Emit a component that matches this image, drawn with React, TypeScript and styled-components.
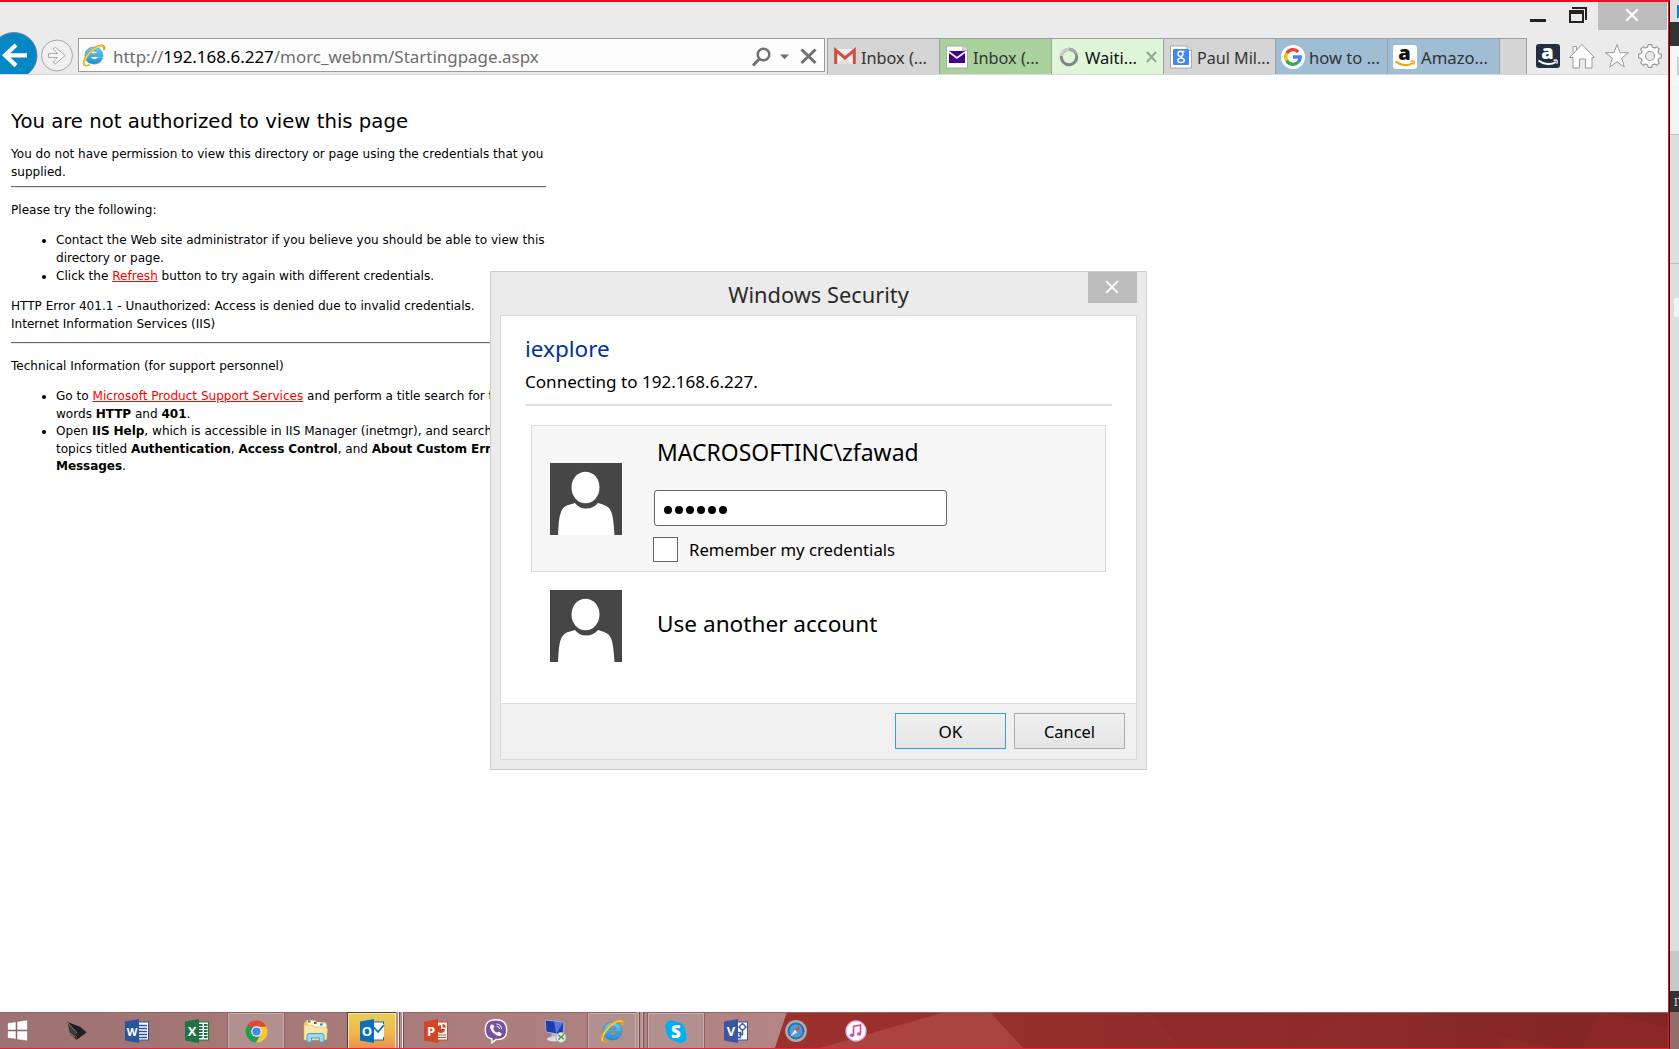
import React from 'react';
import styled, { createGlobalStyle } from 'styled-components';

const UI = '"Noto Sans", "Open Sans", sans-serif';
const PAGE = '"DejaVu Sans", sans-serif';

const Global = createGlobalStyle`
  * { box-sizing: border-box; }
  body { margin: 0; background: #fff; overflow: hidden; font-family: ${UI}; }
  svg { display: block; flex: none; overflow: visible; }
`;

const Screen = styled.div`
  display: flex;
  width: 1679px;
  height: 1049px;
  overflow: hidden;
`;
const Frame = styled.div`
  position: relative;
  display: flex;
  flex-direction: column;
  width: 1670px;
  height: 1049px;
  border-top: 2px solid #e81123;
  border-right: 1px solid #2b0508;
  border-bottom: 1px solid #ee2233;
  background: #fff;
  box-shadow: inset -1px 0 0 #e81123;
`;

/* caption */
const Caption = styled.header`
  display: flex;
  justify-content: flex-end;
  width: 1667px;
  height: 28px;
  background: #ebebeb;
`;
const CaptionButton = styled.button<{ $w: number; $close?: boolean }>`
  display: flex;
  align-items: center;
  justify-content: center;
  width: ${p => p.$w}px;
  height: 28px;
  padding: ${p => (p.$close ? '0 2px 2px 0' : '0 0 0 4px')};
  border: 0;
  background: ${p => (p.$close ? '#bcbcbc' : 'transparent')};
`;

/* toolbar */
const Toolbar = styled.div`
  display: flex;
  align-items: flex-start;
  width: 1668px;
  height: 45px;
  background: #ebebeb;
  border-bottom: 1px solid #d9d9d9;
`;
const NavButtons = styled.div`
  display: flex;
  width: 78px;
  height: 44px;
  overflow: hidden;
`;
const Address = styled.div`
  display: flex;
  align-items: center;
  width: 747px;
  height: 34px;
  margin-top: 8px;
  padding: 0 7px 0 3px;
  border: 1px solid #9a9c9b;
  background: #fdfdfd;
`;
const Url = styled.div`
  flex: 1;
  margin-left: 8px;
  padding-top: 3px;
  font-size: 16.95px;
  line-height: 31px;
  color: #6d6d6d;
  white-space: pre;
  b { font-weight: 400; color: #000; }
`;
const Tabs = styled.nav`
  display: flex;
  width: 700px;
  height: 36px;
  margin: 8px 0 0 2px;
  border-top: 1px solid #a0a0a0;
  border-right: 1px solid #a0a0a0;
  background: #d5d5d5;
`;
const Tab = styled.div<{ $bg: string; $active?: boolean }>`
  display: flex;
  align-items: center;
  width: 112px;
  height: 35px;
  padding-left: 5px;
  border-left: 1px solid #a0a0a0;
  background: ${p => p.$bg};
  color: ${p => (p.$active ? '#111' : '#333')};
`;
const TabIcon = styled.span`
  display: flex;
  justify-content: center;
  width: 24px;
  margin-right: 4px;
`;
const TabText = styled.span<{ $size: number }>`
  flex: 1;
  padding-top: 2px;
  font-size: ${p => p.$size}px;
  line-height: 32px;
  white-space: nowrap;
`;
const BlankTab = styled.div`
  width: 27px;
  border-left: 1px solid #a0a0a0;
`;
const Tools = styled.div`
  display: flex;
  align-items: center;
  gap: 8px;
  margin: 13px 0 0 9px;
`;

/* document */
const Doc = styled.main`
  display: flex;
  flex-direction: column;
  flex: 1;
  width: 536px;
  margin-left: 11px;
  padding-top: 34px;
  font-family: ${PAGE};
  font-size: 12.07px;
  line-height: 18px;
  color: #000;
  white-space: nowrap;
  b { letter-spacing: -0.08px; }
`;
const Heading = styled.h1`
  margin: 0 0 10px;
  font-size: 19.68px;
  line-height: 26px;
  font-weight: 400;
`;
const Para = styled.p<{ $mb: number }>`
  margin: 0 0 ${p => p.$mb}px;
`;
const Rule = styled.hr<{ $mb: number }>`
  width: 535px;
  height: 2px;
  margin: 0 0 ${p => p.$mb}px;
  border: 0;
  border-top: 1px solid #696969;
  border-bottom: 1px solid #e8e8e8;
`;
const List = styled.ul`
  margin: 0 0 12px;
  padding-left: 45px;
`;
const TightItem = styled.li`
  line-height: 17.7px;
`;
const Link = styled.a`
  color: #f00;
  text-decoration: underline;
`;

/* credential dialog */
const Dialog = styled.section`
  position: absolute;
  left: 490px;
  top: 269px;
  display: flex;
  flex-direction: column;
  width: 657px;
  height: 499px;
  padding: 0 9px 9px;
  border: 1px solid #cfcfcf;
  background: #ebebeb;
  color: #000;
`;
const DialogBar = styled.div`
  display: grid;
  grid-template-columns: 49px 1fr 49px;
  height: 43px;
`;
const DialogTitle = styled.h2`
  grid-column: 2;
  margin: 0;
  font-size: 21.8px;
  line-height: 46px;
  font-weight: 400;
  color: #2a2a2a;
  text-align: center;
`;
const DialogClose = styled.button`
  display: flex;
  align-items: center;
  justify-content: center;
  width: 49px;
  height: 31px;
  padding: 0 1px 2px 0;
  border: 0;
  background: #bcbcbc;
`;
const DialogBody = styled.div`
  display: flex;
  flex-direction: column;
  flex: 1;
  border: 1px solid #d9d9d9;
  background: #fff;
`;
const Intro = styled.div`
  height: 90px;
  margin: 0 24px;
  padding-top: 17px;
  border-bottom: 2px solid #dedede;
`;
const AppName = styled.div`
  font-size: 22.5px;
  line-height: 32px;
  color: #003399;
`;
const Connecting = styled.div`
  font-size: 17.07px;
  line-height: 33px;
`;
const Account = styled.div<{ $selected?: boolean }>`
  display: flex;
  width: 575px;
  height: ${p => (p.$selected ? 147 : 110)}px;
  margin: ${p => (p.$selected ? '19px 0 0 30px' : '0 0 0 30px')};
  padding: ${p => (p.$selected ? '37px' : '17px')} 0 0 18px;
  border: 1px solid ${p => (p.$selected ? '#dcdcdc' : 'transparent')};
  background: ${p => (p.$selected ? '#f7f7f7' : 'transparent')};
`;
const Form = styled.div`
  display: flex;
  flex-direction: column;
  margin: -37px 0 0 32px;
`;
const UserName = styled.div`
  margin-left: 3px;
  font-size: 22.95px;
  line-height: 52px;
  height: 64px;
`;
const Password = styled.div`
  display: flex;
  align-items: center;
  gap: 3px;
  width: 293px;
  height: 36px;
  padding: 3px 0 0 9px;
  border: 1px solid #666;
  border-radius: 3px;
  background: #fff;
`;
const Dot = styled.span`
  width: 8px;
  height: 8px;
  border-radius: 50%;
  background: #000;
`;
const Remember = styled.label`
  display: flex;
  margin: 11px 0 0 -1px;
  font-size: 16.73px;
  line-height: 26px;
`;
const Check = styled.span`
  width: 25px;
  height: 25px;
  margin-right: 11px;
  border: 1px solid #666;
  background: #fff;
`;
const OtherAccount = styled.div`
  margin-left: 35px;
  font-size: 22.6px;
  line-height: 67px;
`;
const Footer = styled.footer`
  display: flex;
  justify-content: flex-end;
  gap: 8px;
  height: 56px;
  margin-top: auto;
  padding: 9px 11px 0 0;
  border-top: 1px solid #dedede;
  background: #f0f0f0;
`;
const Button = styled.button<{ $primary?: boolean; $size: number }>`
  width: 111px;
  height: 36px;
  padding: 1px 0 0;
  border: 1px solid ${p => (p.$primary ? '#3399ff' : '#acacac')};
  background: linear-gradient(#f0f0f0, #e5e5e5);
  color: #000;
  font: ${p => p.$size}px ${UI};
  line-height: 32px;
`;

/* taskbar */
const Taskbar = styled.footer`
  position: relative;
  width: 1668px;
  height: 36px;
  overflow: hidden;
`;
const Wallpaper = styled.svg`
  position: absolute;
  inset: 0;
`;
const Slots = styled.div`
  position: relative;
  display: flex;
  padding-left: 47px;
  height: 36px;
`;
const Start = styled.div`
  position: absolute;
  left: 7px;
  top: 8px;
`;
const Slot = styled.div`
  display: flex;
  align-items: center;
  justify-content: center;
  width: 60px;
  height: 36px;
  padding: 1px 1px 0 0;
`;
const Tile = styled.div<{ $w: number; $kind: 'open' | 'alert' }>`
  display: flex;
  align-items: center;
  justify-content: center;
  width: ${p => p.$w}px;
  height: 35px;
  margin-top: 1px;
  border: 1px solid ${p => (p.$kind === 'alert' ? '#f8e6a0' : '#c9adad')};
  border-bottom: 0;
  box-shadow: 0 0 0 1px ${p => (p.$kind === 'alert' ? '#5a3a3a' : '#8a6262')};
  background: ${p => (p.$kind === 'alert' ? 'linear-gradient(#e5cf52, #f0b84c 55%, #ea9150)' : '#b39090')};
`;
const Stack = styled.div<{ $light?: boolean }>`
  width: 4px;
  height: 36px;
  border-right: 1px solid #74504f;
  box-shadow: inset -1px 0 0 ${p => (p.$light ? '#f2e6e6' : '#c9adad')};
  background: #b39090;
`;
const Group = styled.div<{ $w: number; $pad: number }>`
  display: flex;
  width: ${p => p.$w}px;
  height: 36px;
  padding-left: ${p => p.$pad}px;
`;

/* strip of the neighbouring monitor */
const Strip = styled.aside`
  display: flex;
  flex-direction: column;
  width: 9px;
  height: 1049px;
`;
const Band = styled.div<{ $h: number; $bg: string; $line?: string }>`
  display: flex;
  justify-content: flex-end;
  align-items: center;
  height: ${p => p.$h}px;
  overflow: hidden;
  background: ${p => p.$bg};
  border-bottom: ${p => (p.$line ? `1px solid ${p.$line}` : '0')};
`;
const Chip = styled.span<{ $w: number; $h: number; $bg: string }>`
  width: ${p => p.$w}px;
  height: ${p => p.$h}px;
  background: ${p => p.$bg};
`;
const StripText = styled.span`
  width: 5px;
  font-size: 11px;
  color: #ddd;
  white-space: nowrap;
`;

const Cross = ({ s, w, c }: { s: number; w: number; c: string }) => (
  <svg width={s} height={s} viewBox="0 0 12 12" stroke={c} strokeWidth={w} fill="none">
    <path d="M1 1L11 11M11 1L1 11" />
  </svg>
);

const IELogo = ({ size }: { size: number }) => (
  <svg width={size} height={size} viewBox="0 0 24 24" fill="none">
    <defs>
      <linearGradient id="ieb" x1="0" y1="0" x2="0" y2="1">
        <stop offset="0" stopColor="#66d3fb" />
        <stop offset="1" stopColor="#1a8fd6" />
      </linearGradient>
    </defs>
    <path
      d="M12.7 3.2c5.2 0 9.2 4 9.2 9.8H9.1c.2 2 1.800 3.200 3.900 3.200 1.500 0 2.700-.6 3.300-1.800h5.200c-1.200 4-4.500 6.500-8.800 6.500-5.500 0-9.500-3.700-9.500-8.900s4.100-8.800 9.500-8.800zm-3.500 7h7c-.2-1.900-1.600-3-3.500-3s-3.200 1.100-3.500 3z"
      fill="url(#ieb)" stroke="#2583bd" strokeWidth=".6" />
    <path d="M3 22.300C.2 20.500 3.200 13 9 7.500c5-4.800 11.200-7 13.500-5.100 1 .8.9 2.200.2 3.700" stroke="#e7a413" strokeWidth="2.300" />
    <path d="M3 21.900C1 20 4.100 13 9.500 7.800c4.700-4.500 10.400-6.600 12.500-5.100" stroke="#ffd735" strokeWidth="1.300" />
    <path d="M3 22.300c1.200.7 3 .3 5-.8" stroke="#e7a413" strokeWidth="1.300" />
  </svg>
);

const GoogleG = () => (
  <svg width="24" height="24" viewBox="0 0 24 24" fill="none" strokeWidth="3.300">
    <circle cx="12" cy="12" r="12" fill="#fff" />
    <path d="M17.300 6.800A7.300 7.300 0 0 0 5.700 8.300" stroke="#ea4335" />
    <path d="M5.700 8.300a7.300 7.300 0 0 0 0 7.400" stroke="#fbbc05" />
    <path d="M5.700 15.700a7.300 7.300 0 0 0 11.200 1.700" stroke="#34a853" />
    <path d="M12 12h7.200a7.300 7.300 0 0 1-2.300 5.400" stroke="#4285f4" />
  </svg>
);

const Amazon = ({ dark }: { dark?: boolean }) => (
  <svg width="24" height="24" viewBox="0 0 24 24">
    <rect width="24" height="24" rx="3" fill={dark ? '#232f3e' : '#fff'} />
    <text x="11.500" y="15" textAnchor="middle" fontFamily="Open Sans, sans-serif" fontWeight="800" fontSize="20" fill={dark ? '#fff' : '#111'}>a</text>
    <path d="M2.500 16.500c5.500 4.300 12.500 4.600 17.500 1.500" fill="none" stroke={dark ? '#fff' : '#f90'} strokeWidth="2" />
    <path d="M17.500 16.300c3.300-.8 4.600-.2 3.300 3.400" fill="none" stroke={dark ? '#fff' : '#f90'} strokeWidth="1.300" />
  </svg>
);

const Sheet = ({ children }: { children: React.ReactNode }) => (
  <svg width="24" height="24" viewBox="0 0 24 24">
    <path d="M1.500 1h17l4 4v18h-21z" fill="#fff" stroke="#a8aaa8" />
    <path d="M18 1v4.500h4.500" fill="#e8e8e8" stroke="#a8aaa8" />
    {children}
  </svg>
);

const Gmail = () => (
  <svg width="22" height="17" viewBox="0 0 22 17">
    <path d="M1 1h20v15H1z" fill="#f1f1f1" />
    <path d="M4 16l7-7 7 7z" fill="#dedede" />
    <path d="M1.700 16V2.200L11 10l9.300-7.800V16" fill="none" stroke="#d54b3d" strokeWidth="3" />
  </svg>
);
const Spinner = () => (
  <svg width="20" height="20" viewBox="0 0 20 20" fill="none" strokeWidth="3">
    <circle cx="10" cy="10" r="7.700" stroke="#858585" />
    <path d="M2.500 9A7.700 7.700 0 0 1 10 2.300" stroke="#c9d0c7" />
    <path d="M10 2.300a7.700 7.700 0 0 1 7 4.500" stroke="#a5aaa4" />
  </svg>
);

const Avatar = () => (
  <svg width="72" height="72" viewBox="0 0 72 72">
    <rect width="72" height="72" fill="#464646" />
    <ellipse cx="35.500" cy="24.500" rx="14" ry="15.800" fill="#fff" />
    <path d="M8 72C9 57 9 48 15 43.500c3-2 7-2.500 10-3.500 3 3.700 6.500 5.600 11 5.600S45 43.700 48 40c3 1 8 2 10.500 4.500C63 49 63.500 58 64.500 72z" fill="#fff" />
  </svg>
);

const Office = ({ letter, color, kind }: { letter: string; color: string; kind: 'lines' | 'grid' | 'mail' | 'pie' | 'flow' }) => (
  <svg width="24" height="24" viewBox="0 0 24 24">
    <rect x="11" y="3" width="12.500" height="18" fill="#fff" stroke={color} />
    {kind === 'lines' && <path d="M14 6.500h8M14 9.500h8M14 12.500h8M14 15.500h8M14 18.500h8" stroke={color} strokeWidth="1.300" />}
    {kind === 'grid' && <path d="M14 6h3.500M19 6h3.500M14 9h3.500M19 9h3.500M14 12h3.500M19 12h3.500M14 15h3.500M19 15h3.500M14 18h3.500M19 18h3.500" stroke={color} strokeWidth="1.800" />}
    {kind === 'mail' && <><rect x="11" y="5" width="13" height="13" fill="#fff" stroke="none" /><path d="M13.500 8l4.500 5 6-7" fill="none" stroke={color} strokeWidth="1.800" /></>}
    {kind === 'pie' && <><path d="M17 6a4 4 0 1 0 4 4h-4z" fill={color} /><path d="M18.500 5v3.500H22A4 4 0 0 0 18.500 5z" fill={color} /><path d="M14 16h8M14 18.500h8" stroke={color} strokeWidth="1.200" /></>}
    {kind === 'flow' && <path d="M18.500 4.500L22 8l-3.500 3.500L15 8zM18.500 11.500v4H15M13.500 13.500h3v5h-3z" fill="#fff" stroke={color} strokeWidth="1.400" />}
    <path d="M0 2.500L14 0v24L0 21.500z" fill={color} />
    <text x="7" y="16.500" textAnchor="middle" fontFamily="Open Sans, sans-serif" fontWeight="700" fontSize={letter === 'W' ? 11 : 13} fill="#fff">{letter}</text>
  </svg>
);

const WindowsLogo = () => (
  <svg width="21" height="21" viewBox="0 0 21 21" fill="#fff" stroke="#7c5a5a" strokeWidth=".5">
    <path d="M.5 3l8.500-1.300V10H.5zM10 1.500L20.500 0v10H10zM.5 11H9v8.300L.5 18zM10 11h10.500v10L10 19.500z" />
  </svg>
);
const Laptop = () => (
  <svg width="20" height="20" viewBox="0 0 20 20">
    <path d="M.5 1l13 5 5 5-8 2z" fill="#1d1d1d" />
    <path d="M.5 1.500L10 12l-.5 7L3 13z" fill="#3a3a3a" />
    <path d="M9.500 12.500l6-4.500 4 3.500L9.500 19z" fill="#222" />
    <path d="M1 2l9 10M3 12l5 4" stroke="#999" strokeWidth=".7" />
  </svg>
);
const Chrome = () => (
  <svg width="23" height="23" viewBox="0 0 24 24">
    <circle cx="12" cy="12" r="11.500" fill="#fbc834" />
    <path d="M12 12L2 6.200A11.500 11.500 0 0 1 22 6.200L22.300 7H12z" fill="#dd4b3e" />
    <path d="M2 6.200A11.500 11.500 0 0 0 11.500 23.500L16.500 14.500 12 12 7.500 15z" fill="#229a5a" />
    <path d="M2 6.200l5.500 9L12 12V7z" fill="#229a5a" />
    <path d="M12 7L2 6.200 7 3l5 3.500z" fill="#dd4b3e" />
    <circle cx="12" cy="12" r="5.400" fill="#fff" />
    <circle cx="12" cy="12" r="4.300" fill="#4787ed" />
  </svg>
);
const Explorer = () => (
  <svg width="25" height="24" viewBox="0 0 25 24">
    <path d="M1 4l3-3h5l2 2h11l2 2v14H1z" fill="#e6c56c" />
    <path d="M4.500 1.500h8v5h-8zM11 3h7v5h-7zM17 4.500h6v4h-6z" fill="#fffbe8" />
    <path d="M5 1.500h2.500v2H5z" fill="#2f9a45" /><path d="M11 3h2.500v2H11z" fill="#d32d20" /><path d="M17 4.500h2.500v2H17z" fill="#2d78c9" />
    <path d="M1 6h8l2 2h12l1.500 2-1 11H1z" fill="#f8e7a5" stroke="#d6b760" strokeWidth=".6" />
    <path d="M4 23v-6.500q0-2 2-2h13q2 0 2 2V23h-4.500v-4h-8v4z" fill="#9cd8f0" stroke="#4e9fc8" />
  </svg>
);
const Viber = () => (
  <svg width="24" height="24" viewBox="0 0 24 24">
    <path d="M12 .8c7.500 0 10.700 3 10.700 10.200S19.500 20.500 12 20.500l-4 3.300V20C3 19 1.300 16 1.300 11 1.300 3.800 4.500.8 12 .8z" fill="#7b519d" stroke="#fff" strokeWidth="1.400" />
    <path d="M7.500 5.500c-3 2-.5 6.500 2.500 9 3 2.600 6 3.500 7.500 1.200.7-1-.5-2-2-2.800-1.500-.8-1.800 1-2.800.7-2-.8-3.300-2.600-3.500-4 .2-1 1.500-.9 1-2.300-.5-1.200-1.500-2.300-2.700-1.800z" fill="#fff" />
    <path d="M12.500 5c3 0 5.200 2.200 5.200 5.200M12.800 7.300c1.700.1 2.600 1.200 2.700 2.700" fill="none" stroke="#fff" />
  </svg>
);
const Remote = () => (
  <svg width="23" height="24" viewBox="0 0 23 24">
    <path d="M1 1l19 2-1 13L2 13z" fill="#1d3bb4" stroke="#a7b2c4" />
    <path d="M10 2l9.500 1.200L12 15z" fill="#7ba3ec" opacity=".6" />
    <path d="M8 14l5 1 1 4H7z" fill="#aebacb" /><ellipse cx="10" cy="20" rx="7" ry="2.500" fill="#d7dce4" />
    <circle cx="17" cy="18.500" r="5" fill="#e8ece8" stroke="#a5a9a5" />
    <path d="M14.500 16l2.200 2.300-2.200 2.500M19.700 15.500l-2.200 2.300 2.200 2.500" fill="none" stroke="#3d9140" strokeWidth="1.300" />
  </svg>
);
const Skype = () => (
  <svg width="22" height="23" viewBox="0 0 22 23">
    <circle cx="6.500" cy="6.500" r="6.300" fill="#00aff0" /><circle cx="15.500" cy="16.500" r="6.300" fill="#00aff0" /><circle cx="11" cy="11.500" r="9.700" fill="#00aff0" />
    <text x="11" y="17.500" textAnchor="middle" fontFamily="Open Sans, sans-serif" fontWeight="800" fontSize="17" fill="#fff">S</text>
  </svg>
);
const Safari = () => (
  <svg width="22" height="22" viewBox="0 0 22 22">
    <circle cx="11" cy="11" r="9.700" fill="#2f78b8" stroke="#a9adb0" strokeWidth="2.400" />
    <circle cx="11" cy="11" r="7" fill="#4a9bd6" stroke="#173f66" strokeDasharray="1 1.500" />
    <path d="M16.500 5.500l-4.300 6.700-2.500-2.500z" fill="#e24a36" /><path d="M5.500 16.500l4.300-6.700 2.500 2.500z" fill="#eee" />
  </svg>
);
const ITunes = () => (
  <svg width="22" height="22" viewBox="0 0 22 22">
    <circle cx="11" cy="11" r="10" fill="#fff" stroke="#dcb2e2" strokeWidth="1.300" />
    <path d="M8.500 15V6.500l7-1.500v8.500" fill="none" stroke="#dc4a94" strokeWidth="1.700" />
    <ellipse cx="7" cy="15.300" rx="2.200" ry="1.800" fill="#8f5fe8" /><ellipse cx="14" cy="14" rx="2.200" ry="1.800" fill="#c455cf" />
  </svg>
);

const gear = (() => {
  const p: string[] = [];
  for (let i = 0; i < 8; i++) {
    [[-15, 9.2], [-9, 11.5], [9, 11.5], [15, 9.2]].forEach(([d, r]) => {
      const a = ((i * 45 + d) * Math.PI) / 180;
      p.push(`${(12 + r * Math.sin(a)).toFixed(2)},${(12 - r * Math.cos(a)).toFixed(2)}`);
    });
  }
  return p.join(' ');
})();

export default function App() {
  return (
    <Screen>
      <Global />
      <Frame>
        <Caption>
          <CaptionButton $w={36} aria-label="Minimize">
            <svg width="16" height="28"><rect y="17" width="16" height="3" fill="#222" /></svg>
          </CaptionButton>
          <CaptionButton $w={44} aria-label="Restore">
            <svg width="18" height="28" viewBox="0 0 18 28">
              <path d="M3 6h14v12" fill="none" stroke="#222" strokeWidth="2" />
              <path d="M0 8h15v13H0zM2 12v7h11v-7z" fill="#222" fillRule="evenodd" />
            </svg>
          </CaptionButton>
          <CaptionButton $w={69} $close aria-label="Close"><Cross s={14} w={1.900} c="#fff" /></CaptionButton>
        </Caption>
        <Toolbar>
          <NavButtons>
            <svg width="78" height="44" viewBox="0 0 78 44" fill="none">
              <circle cx="14" cy="25.500" r="23" fill="#0487c6" stroke="#78838a" strokeWidth="1" />
              <path d="M27 25.300H5M16 15L5 25.300 16 35.600" stroke="#fff" strokeWidth="4.200" />
              <circle cx="57" cy="25.500" r="15.500" fill="#f0f0f0" stroke="#a6a6a6" />
              <path d="M48.500 23.500h9l-4.500-4.800 2.500-1.400 9.700 8.200-9.700 8.300-2.500-1.500 4.500-4.800h-9z" fill="#f7f7f7" stroke="#aaa" />
            </svg>
          </NavButtons>
          <Address>
            <IELogo size={23} />
            <Url>http://<b>192.168.6.227</b>/morc_webnm/Startingpage.aspx</Url>
            <svg width="66" height="18" viewBox="0 0 66 20" fill="none" stroke="#717171" preserveAspectRatio="xMidYMin slice">
              <circle cx="12.500" cy="8.500" r="5.800" strokeWidth="2.500" />
              <path d="M8.300 13L2 19.500" strokeWidth="3" />
              <path d="M29 8.500h9l-4.500 4.700z" fill="#717171" stroke="none" />
              <path d="M50.500 3.500l14 13.500M64.500 3.500l-14 13.500" strokeWidth="3" />
            </svg>
          </Address>
          <Tabs>
            <Tab $bg="#d5d5d5"><TabIcon><Gmail /></TabIcon><TabText $size={16.3}>Inbox (...</TabText></Tab>
            <Tab $bg="#a9d29c">
              <TabIcon><Sheet><rect x="4" y="6" width="16" height="12" fill="#400090" /><path d="M4 7l8 6 8-6" fill="none" stroke="#fff" strokeWidth="1.600" /></Sheet></TabIcon>
              <TabText $size={16.3}>Inbox (...</TabText>
            </Tab>
            <Tab $bg="#dff6d9" $active>
              <TabIcon><Spinner /></TabIcon><TabText $size={16.5}>Waiti...</TabText>
              <svg width="21" height="12" viewBox="0 0 21 12"><path d="M5 1l9 10M14 1L5 11" stroke="#94a890" strokeWidth="2" /></svg>
            </Tab>
            <Tab $bg="#d5d5d5">
              <TabIcon>
                <Sheet>
                  <rect x="4" y="4" width="16" height="16" rx="1" fill="#4285f4" />
                  <g fill="none" stroke="#fff" strokeWidth="1.400">
                    <ellipse cx="11.500" cy="8.800" rx="2.500" ry="2.600" />
                    <path d="M12.500 6.500h3M13 11c-1.500 1-1 1.700.5 2.500" />
                    <ellipse cx="12" cy="15.300" rx="3.300" ry="2.200" />
                  </g>
                </Sheet>
              </TabIcon>
              <TabText $size={16.12}>Paul Mil...</TabText>
            </Tab>
            <Tab $bg="#a0bdd6"><TabIcon><GoogleG /></TabIcon><TabText $size={16.6}>how to ...</TabText></Tab>
            <Tab $bg="#a0bdd6"><TabIcon><Amazon /></TabIcon><TabText $size={16.69}>Amazo...</TabText></Tab>
            <BlankTab />
          </Tabs>
          <Tools>
            <Amazon dark />
            <svg width="28" height="26" viewBox="0 0 28 26" fill="#fff" stroke="#9a9a9a">
              <path d="M1.500 14.500L14 1.500l12.500 13H24V25h-6.500v-9h-6v9H5V14.500zM5 10V3.500h3.500V7" strokeLinejoin="round" />
            </svg>
            <svg width="26" height="26" viewBox="0 0 26 26" fill="#fff" stroke="#9a9a9a">
              <path d="M13 1.500l3 8.200h8.500l-6.800 5.400 2.600 8.900-7.300-5.200L5.700 24l2.600-8.900L1.500 9.700H10z" />
            </svg>
            <svg width="24" height="24" viewBox="0 0 24 24" fill="#fff" stroke="#9a9a9a" strokeWidth="1.200">
              <polygon points={gear} strokeLinejoin="round" />
              <circle cx="12" cy="12" r="4.500" fill="#ebebeb" />
            </svg>
          </Tools>
        </Toolbar>

        <Doc>
          <Heading>You are not authorized to view this page</Heading>
          <Para $mb={5}>You do not have permission to view this directory or page using the credentials that you<br />supplied.</Para>
          <Rule $mb={13} />
          <Para $mb={12}>Please try the following:</Para>
          <List>
            <li>Contact the Web site administrator if you believe you should be able to view this<br />directory or page.</li>
            <li>Click the <Link>Refresh</Link> button to try again with different credentials.</li>
          </List>
          <Para $mb={9}>HTTP Error 401.1 - Unauthorized: Access is denied due to invalid credentials.<br />Internet Information Services (IIS)</Para>
          <Rule $mb={13} />
          <Para $mb={12}>Technical Information (for support personnel)</Para>
          <List>
            <li>Go to <Link>Microsoft Product Support Services</Link> and perform a title search for the<br />words <b>HTTP</b> and <b>401</b>.</li>
            <TightItem>Open <b>IIS Help</b>, which is accessible in IIS Manager (inetmgr), and search for<br />topics titled <b>Authentication</b>, <b>Access Control</b>, and <b>About Custom Error<br />Messages</b>.</TightItem>
          </List>
        </Doc>

        <Taskbar>
          <Wallpaper width="1668" height="36" viewBox="0 0 1668 36" preserveAspectRatio="none">
            <defs>
              <linearGradient id="glass"><stop offset="0" stopColor="#9e7272" /><stop offset="1" stopColor="#b48585" /></linearGradient>
              <linearGradient id="red"><stop offset="0" stopColor="#a63a36" /><stop offset=".3" stopColor="#a33633" /><stop offset="1" stopColor="#832624" /></linearGradient>
            </defs>
            <path d="M0 0h1668v36H0z" fill="url(#red)" />
            <path d="M0 0h787l-12 36H0z" fill="url(#glass)" />
            <path d="M820 36L945 0h45l33 36z" fill="#b8514d" opacity=".6" />
            <path d="M787 0h150L800 36h-25z" fill="#9b2f2c" opacity=".45" />
            <path d="M1150 0h200l-60 36h-110z" fill="#8d2725" opacity=".5" />
            <path d="M1500 25l60 11h-60zM1600 0l68 15v21h-86z" fill="#932a28" opacity=".5" />
            <path d="M0 .5h1668" stroke="#8e6766" />
          </Wallpaper>
          <Start><WindowsLogo /></Start>
          <Slots>
            <Slot><Laptop /></Slot>
            <Slot><Office letter="W" color="#2a5699" kind="lines" /></Slot>
            <Slot><Office letter="X" color="#207245" kind="grid" /></Slot>
            <Group $w={59} $pad={1}><Tile $w={56} $kind="open"><Chrome /></Tile></Group>
            <Slot><Explorer /></Slot>
            <Group $w={60} $pad={2}><Tile $w={48} $kind="alert"><Office letter="O" color="#0a6fc2" kind="mail" /></Tile><Stack $light /><Stack $light /></Group>
            <Slot><Office letter="P" color="#d24625" kind="pie" /></Slot>
            <Slot><Viber /></Slot>
            <Slot><Remote /></Slot>
            <Group $w={60} $pad={2}><Tile $w={48} $kind="open"><IELogo size={24} /></Tile><Stack /><Stack /></Group>
            <Group $w={60} $pad={2}><Tile $w={56} $kind="open"><Skype /></Tile></Group>
            <Slot><Office letter="V" color="#3955a3" kind="flow" /></Slot>
            <Slot><Safari /></Slot>
            <Slot><ITunes /></Slot>
          </Slots>
        </Taskbar>

        <Dialog>
          <DialogBar>
            <DialogTitle>Windows Security</DialogTitle>
            <DialogClose aria-label="Close"><Cross s={14} w={1.700} c="#fff" /></DialogClose>
          </DialogBar>
          <DialogBody>
            <Intro>
              <AppName>iexplore</AppName>
              <Connecting>Connecting to 192.168.6.227.</Connecting>
            </Intro>
            <Account $selected>
              <Avatar />
              <Form>
                <UserName>MACROSOFTINC\zfawad</UserName>
                <Password>{[0, 1, 2, 3, 4, 5].map(i => <Dot key={i} />)}</Password>
                <Remember><Check />Remember my credentials</Remember>
              </Form>
            </Account>
            <Account>
              <Avatar />
              <OtherAccount>Use another account</OtherAccount>
            </Account>
            <Footer>
              <Button $primary $size={17}>OK</Button>
              <Button $size={16.4}>Cancel</Button>
            </Footer>
          </DialogBody>
        </Dialog>
      </Frame>

      <Strip>
        <Band $h={22} $bg="#dedede"><Chip $w={2} $h={13} $bg="#0f7fd6" /></Band>
        <Band $h={24} $bg="#333" />
        <Band $h={40} $bg="#f6f6f6"><Chip $w={2} $h={18} $bg="#cfcfcf" /></Band>
        <Band $h={49} $bg="#f3f3f3" $line="#bdbdbd" />
        <Band $h={129} $bg="#dedede" $line="#bdbdbd" />
        <Band $h={87} $bg="#dedede"><Chip $w={5} $h={19} $bg="#f2f2f2" /></Band>
        <Band $h={600} $bg="#dedede" />
        <Band $h={40} $bg="#c8c8c8" />
        <Band $h={21} $bg="#333"><StripText>IT</StripText></Band>
        <Band $h={37} $bg="#936c6c" />
      </Strip>
    </Screen>
  );
}
